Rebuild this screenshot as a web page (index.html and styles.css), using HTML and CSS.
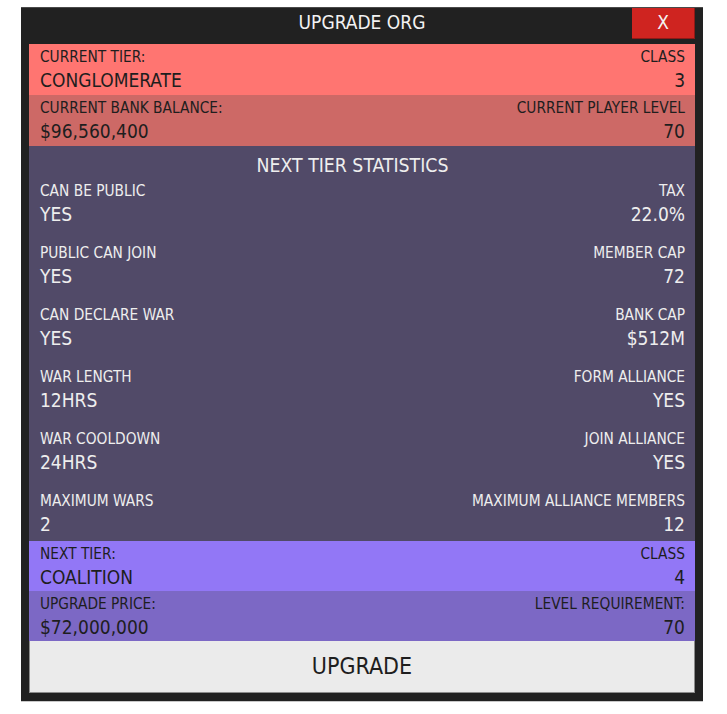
FILE: index.html
```html
<!DOCTYPE html>
<html>
<head>
<meta charset="utf-8">
<link rel="stylesheet" href="styles.css">
</head>
<body>
<div class="frame">
  <div class="header">
    <div class="title">UPGRADE ORG</div>
    <div class="close">X</div>
  </div>
  <div class="row row-red">
    <div class="cell"><div class="label">CURRENT TIER:</div><div class="value">CONGLOMERATE</div></div>
    <div class="cell right"><div class="label">CLASS</div><div class="value">3</div></div>
  </div>
  <div class="row row-red2">
    <div class="cell"><div class="label">CURRENT BANK BALANCE:</div><div class="value">$96,560,400</div></div>
    <div class="cell right"><div class="label">CURRENT PLAYER LEVEL</div><div class="value">70</div></div>
  </div>
  <div class="stats">
    <div class="stats-title">NEXT TIER STATISTICS</div>
    <div class="stat-grid">
      <div class="cell"><div class="label">CAN BE PUBLIC</div><div class="value">YES</div></div>
      <div class="cell right"><div class="label">TAX</div><div class="value">22.0%</div></div>
      <div class="cell"><div class="label">PUBLIC CAN JOIN</div><div class="value">YES</div></div>
      <div class="cell right"><div class="label">MEMBER CAP</div><div class="value">72</div></div>
      <div class="cell"><div class="label">CAN DECLARE WAR</div><div class="value">YES</div></div>
      <div class="cell right"><div class="label">BANK CAP</div><div class="value">$512M</div></div>
      <div class="cell"><div class="label">WAR LENGTH</div><div class="value">12HRS</div></div>
      <div class="cell right"><div class="label">FORM ALLIANCE</div><div class="value">YES</div></div>
      <div class="cell"><div class="label">WAR COOLDOWN</div><div class="value">24HRS</div></div>
      <div class="cell right"><div class="label">JOIN ALLIANCE</div><div class="value">YES</div></div>
      <div class="cell"><div class="label">MAXIMUM WARS</div><div class="value">2</div></div>
      <div class="cell right"><div class="label">MAXIMUM ALLIANCE MEMBERS</div><div class="value">12</div></div>
    </div>
  </div>
  <div class="row row-violet">
    <div class="cell"><div class="label">NEXT TIER:</div><div class="value">COALITION</div></div>
    <div class="cell right"><div class="label">CLASS</div><div class="value">4</div></div>
  </div>
  <div class="row row-violet2">
    <div class="cell"><div class="label">UPGRADE PRICE:</div><div class="value">$72,000,000</div></div>
    <div class="cell right"><div class="label">LEVEL REQUIREMENT:</div><div class="value">70</div></div>
  </div>
  <div class="upgrade">UPGRADE</div>
</div>
</body>
</html>
```
FILE: styles.css
```css
* { box-sizing: border-box; }
html, body { margin: 0; padding: 0; background: #ffffff; }
body {
  font-family: "DejaVu Sans Condensed", "DejaVu Sans", sans-serif;
  font-stretch: condensed;
}
.frame {
  margin: 7px 0 0 21px;
  width: 682px;
  height: 695px;
  background: #212121;
  border-top: 1px solid #4a4a4a;
  border-bottom: 1px solid #c8c8c8;
  padding: 0 8px 7px 8px;
  display: flex;
  flex-direction: column;
}
.header {
  height: 36px;
  display: flex;
  align-items: flex-start;
  justify-content: center;
  position: relative;
}
.title {
  color: #f2f2f2;
  font-size: 19px;
  line-height: 29px;
}
.close {
  position: absolute;
  right: 0;
  top: 0;
  width: 63px;
  height: 31px;
  background: #cf2420;
  border-right: 1px solid #8e1a17;
  border-bottom: 1px solid #8e1a17;
  color: #f4f4f4;
  font-size: 19px;
  line-height: 29px;
  text-align: center;
}
.row {
  height: 51px;
  display: flex;
  justify-content: space-between;
  padding: 3px 10px 0 11px;
  color: #1e1e1e;
}
.row-red { background: #ff7571; }
.row-red2 { background: #cd6966; height: 51px; }
.row-violet { background: #9277f6; height: 50px; }
.row-violet2 { background: #7c68c5; height: 50px; }
.cell { display: flex; flex-direction: column; }
.cell.right { align-items: flex-end; text-align: right; }
.label { font-size: 15.3px; line-height: 20px; }
.value { font-size: 19px; line-height: 26px; }
.stats {
  background: #514a68;
  color: #eeeeee;
  height: 395px;
  padding: 8px 10px 0 11px;
}
.stats-title {
  text-align: center;
  font-size: 19.3px;
  line-height: 24px;
  margin-bottom: 3px;
  padding-right: 20px;
}
.stat-grid {
  display: grid;
  grid-template-columns: 1fr 1fr;
  row-gap: 16px;
}
.upgrade {
  height: 52px;
  background: #ebebeb;
  border: 1px solid #8c8c8c;
  border-top: none;
  color: #1e1e1e;
  font-size: 23px;
  line-height: 50px;
  text-align: center;
}
```
